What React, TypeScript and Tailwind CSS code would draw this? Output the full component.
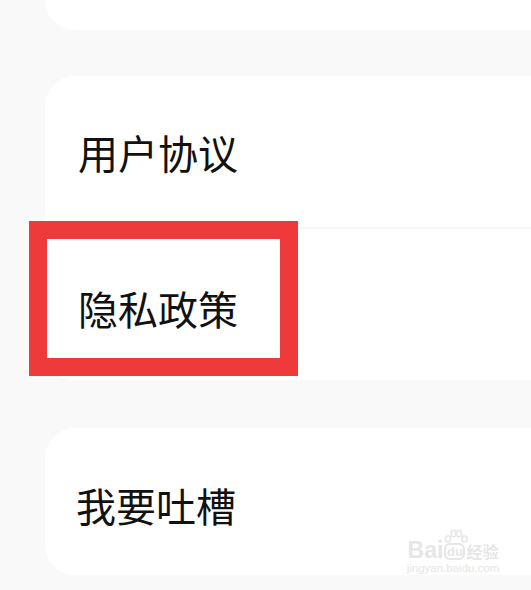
export default function App() {
  const font = { fontFamily: '"Noto Sans CJK SC", "Noto Sans", sans-serif' };
  return (
    <div className="relative w-[531px] h-[590px] overflow-hidden bg-[#f9f9f9]" style={font}>
      <div className="flex flex-col">
        {/* top card, mostly scrolled away */}
        <div className="ml-[45px] h-[30px] bg-white rounded-bl-[30px]" />

        <div className="ml-[45px] mt-[46px] bg-white rounded-l-[30px]">
          <div className="h-[151px] flex items-center pl-[33px] text-[40px] text-[#111]">用户协议</div>
          <div className="h-[2px] bg-[#f6f6f6]" />
          <div className="h-[151px] flex items-center pl-[33px] pt-[6px] text-[40px] text-[#111]">隐私政策</div>
        </div>

        <div className="ml-[45px] mt-[48px] h-[147px] bg-white rounded-l-[30px] flex items-center pl-[31px] pt-[6px] text-[40px] text-[#111]">
          我要吐槽
        </div>
      </div>

      {/* red annotation box */}
      <div className="absolute left-[29px] top-[221px] w-[269px] h-[155px] border-[18px] border-[#ee3a3a]" />

      {/* watermark */}
      <div className="absolute left-[405px] top-[540px] w-[96px] flex flex-col items-center text-[#e6e6e6]">
        <div className="flex items-end leading-none">
          <span className="text-[23px] font-bold leading-[20px]" style={{ fontFamily: '"Liberation Sans", sans-serif' }}>Bai</span>
          <span className="relative mx-[1px] w-[21px] h-[17px] flex items-center justify-center rounded-[6px] border-2 border-[#e6e6e6] text-[13px] font-bold" style={{ fontFamily: '"Liberation Sans", sans-serif' }}>
            du
            <svg className="absolute -top-[16px] left-[-2px]" width="24" height="15" viewBox="0 0 24 15" fill="none" stroke="#e6e6e6" strokeWidth="1.5">
              <ellipse cx="4" cy="10" rx="2.6" ry="3" />
              <ellipse cx="9.5" cy="4.5" rx="2.6" ry="3.3" />
              <ellipse cx="15" cy="4.5" rx="2.6" ry="3.3" />
              <ellipse cx="20.5" cy="10" rx="2.6" ry="3" />
            </svg>
          </span>
          <span className="text-[16px] font-bold leading-[18px]">经验</span>
        </div>
        <div className="text-[11.5px] mt-[3px] leading-none" style={{ fontFamily: '"Liberation Sans", sans-serif' }}>jingyan.baidu.com</div>
      </div>
    </div>
  );
}
